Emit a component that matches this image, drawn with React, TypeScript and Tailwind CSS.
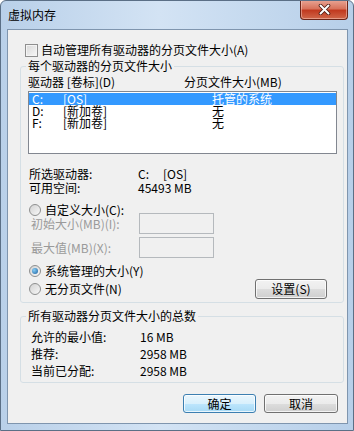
import type { ReactNode } from "react";

const drives = [
  { drive: "C:", label: "[OS]", size: "托管的系统", selected: true },
  { drive: "D:", label: "[新加卷]", size: "无", selected: false },
  { drive: "F:", label: "[新加卷]", size: "无", selected: false },
];

const totals = [
  { label: "允许的最小值:", value: "16 MB" },
  { label: "推荐:", value: "2958 MB" },
  { label: "当前已分配:", value: "2958 MB" },
];

export default function App() {
  return (
    <div className="relative flex h-[431px] w-[354px] flex-col overflow-hidden rounded-t-[6px] border border-[#5b6f86] bg-[linear-gradient(90deg,#b9d0e9_0%,#d3e3f4_45%,#c6daef_70%,#b7cfe9_100%)] font-['Noto_Sans_CJK_SC',sans-serif] text-[12px] text-black">
      <div className="flex h-[28px] shrink-0 items-center pl-[7px] leading-none">虚拟内存</div>
      <CloseButton />

      <div className="ml-[6px] mr-[5px] flex h-[395px] flex-col border border-[#7f95ae] bg-[#f0f0f0]">
        <div className="flex h-[16px] items-center gap-[3px] pl-[17px] mt-[12px]">
          <span className="h-[13px] w-[13px] border border-[#8f8f8f] bg-[linear-gradient(135deg,#d8d8d8,#f8f8f8)] shadow-[inset_0_0_0_1px_#f4f4f4]" />
          <span className="leading-[16px]">自动管理所有驱动器的分页文件大小(A)</span>
        </div>

        <GroupBox title="每个驱动器的分页文件大小">
          <div className="flex h-[16px] leading-[16px]">
            <span className="w-[156px]">驱动器 [卷标](D)</span>
            <span>分页文件大小(MB)</span>
          </div>

          <div className="mt-[1px] h-[63px] border border-[#828790] bg-white pt-[1px]">
            {drives.map((d) => (
              <div
                key={d.drive}
                className={`flex h-[12px] pl-[3px] leading-[12px] ${
                  d.selected ? "bg-[#3399ff] text-white" : ""
                }`}
              >
                <span className="w-[31px]">{d.drive}</span>
                <span className="w-[149px]">{d.label}</span>
                <span>{d.size}</span>
              </div>
            ))}
          </div>

          <div className="mt-[13px] pl-[1px]">
            <div className="flex h-[14px] leading-[14px]">
              <span className="w-[109px]">所选驱动器:</span>
              <span className="w-[25px]">C:</span>
              <span>[OS]</span>
            </div>
            <div className="flex h-[14px] leading-[14px]">
              <span className="w-[109px]">可用空间:</span>
              <span>45493 MB</span>
            </div>
          </div>

          <RadioRow className="mt-[7px]" label="自定义大小(C):" />

          <SizeField className="mt-[-5px]" label="初始大小(MB)(I):" />
          <SizeField className="mt-[3px]" label="最大值(MB)(X):" />

          <RadioRow className="mt-[5px]" label="系统管理的大小(Y)" checked />

          <div className="flex h-[20px] items-center justify-between pr-[10px]">
            <RadioRow label="无分页文件(N)" />
            <Button className="w-[72px] h-[20px]">设置(S)</Button>
          </div>
          <div className="h-[3px]" />
        </GroupBox>

        <GroupBox title="所有驱动器分页文件大小的总数" className="mt-[5px]">
          <div className="mt-[4px] pl-[3px]">
            {totals.map((t) => (
              <div key={t.label} className="flex h-[17px] leading-[17px]">
                <span className="w-[109px]">{t.label}</span>
                <span>{t.value}</span>
              </div>
            ))}
          </div>
          <div className="h-[3px]" />
        </GroupBox>

        <div className="mt-[11px] flex justify-end gap-[8px] pr-[9px]">
          <Button primary className="h-[19px] w-[73px]">
            确定
          </Button>
          <Button className="h-[19px] w-[74px]">取消</Button>
        </div>
      </div>
    </div>
  );
}

function CloseButton() {
  return (
    <div className="absolute right-[5px] top-[-1px] flex h-[20px] w-[48px] items-center justify-center rounded-b-[4px] border border-t-0 border-[#6b2418] bg-[linear-gradient(180deg,#e9a696_0%,#d8735c_45%,#c13a20_55%,#d0674a_100%)] shadow-[inset_0_0_0_1px_rgba(255,220,210,0.45)]">
      <svg width="13" height="11" viewBox="0 0 13 11">
        <path d="M2.5 1.5 L10.5 9.5 M10.5 1.5 L2.5 9.5" stroke="#4a1a12" strokeWidth="3.6" strokeLinecap="round" />
        <path d="M2.5 1.5 L10.5 9.5 M10.5 1.5 L2.5 9.5" stroke="#ffffff" strokeWidth="2" strokeLinecap="round" />
      </svg>
    </div>
  );
}

function GroupBox({
  title,
  className = "",
  children,
}: {
  title: string;
  className?: string;
  children: ReactNode;
}) {
  return (
    <fieldset
      className={`ml-[12px] w-[324px] rounded-[3px] border border-[#d5dfe5] pl-[7px] pr-[6px] ${className}`}
    >
      <legend className="ml-[-2px] px-[2px] leading-[16px]">{title}</legend>
      {children}
    </fieldset>
  );
}

function RadioRow({
  label,
  checked = false,
  className = "",
}: {
  label: string;
  checked?: boolean;
  className?: string;
}) {
  return (
    <div className={`flex h-[16px] items-center gap-[4px] pl-[1px] ${className}`}>
      <span className="flex h-[12px] w-[12px] items-center justify-center rounded-full border border-[#8e8f8f] bg-[linear-gradient(135deg,#d2d2d2,#f8f8f8)]">
        {checked && (
          <span className="h-[6px] w-[6px] rounded-full bg-[radial-gradient(circle_at_35%_35%,#86cdf5,#1b5f9e)]" />
        )}
      </span>
      <span className="leading-[16px]">{label}</span>
    </div>
  );
}

function SizeField({ label, className = "" }: { label: string; className?: string }) {
  return (
    <div className={`flex h-[21px] items-center pl-[3px] ${className}`}>
      <span className="w-[108px] leading-[16px] text-[#9a9a9a]">{label}</span>
      <span className="h-[21px] w-[75px] border border-[#b5b9bd] bg-[#f0f0f0]" />
    </div>
  );
}

function Button({
  children,
  primary = false,
  className = "",
}: {
  children: ReactNode;
  primary?: boolean;
  className?: string;
}) {
  return (
    <button
      type="button"
      className={`flex items-center justify-center rounded-[3px] border leading-none shadow-[inset_0_0_0_1px_rgba(255,255,255,0.75)] ${
        primary
          ? "border-[#3c7fb1] bg-[linear-gradient(180deg,#eaf6fd_0%,#d9f0fc_50%,#bee6fd_50%,#a7d9f5_100%)]"
          : "border-[#707070] bg-[linear-gradient(180deg,#f2f2f2_0%,#ebebeb_50%,#dddddd_50%,#cfcfcf_100%)]"
      } ${className}`}
    >
      {children}
    </button>
  );
}
